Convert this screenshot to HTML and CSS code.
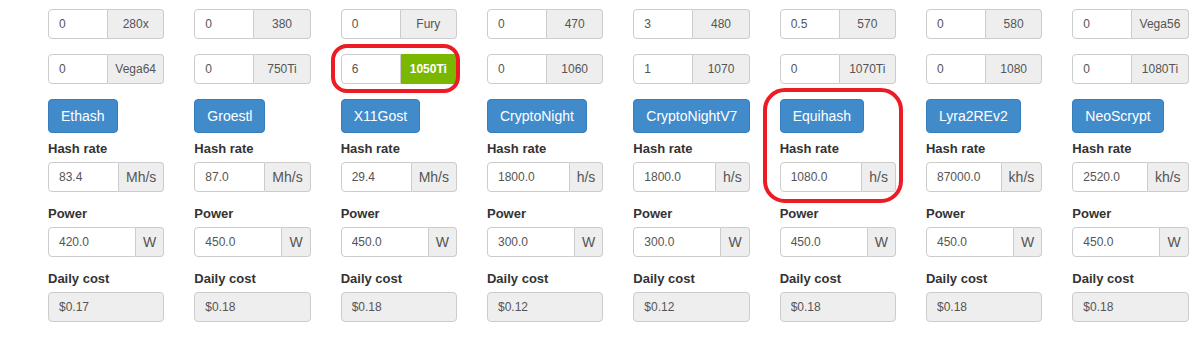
FILE: index.html
```html
<!DOCTYPE html>
<html lang="en">
  <head>
    <meta charset="UTF-8" />
    <meta name="viewport" content="width=device-width, initial-scale=1.0" />
    <title>Mining calculator</title>
    <link rel="stylesheet" href="styles.css">
  </head>
  <body>
    <main class="calc">
      <div class="algo-col">
        <div class="gpu-group"><input type="text" value="0" /><span class="gpu">280x</span></div>
        <div class="gpu-group"><input type="text" value="0" /><span class="gpu">Vega64</span></div>
        <button class="algo">Ethash</button>
        <label>Hash rate</label>
        <div class="unit-group"><input type="text" value="83.4" /><span class="unit">Mh/s</span></div>
        <label>Power</label>
        <div class="unit-group"><input type="text" value="420.0" /><span class="unit">W</span></div>
        <label>Daily cost</label>
        <input class="cost" type="text" value="$0.17" disabled />
      </div>

      <div class="algo-col">
        <div class="gpu-group"><input type="text" value="0" /><span class="gpu">380</span></div>
        <div class="gpu-group"><input type="text" value="0" /><span class="gpu">750Ti</span></div>
        <button class="algo">Groestl</button>
        <label>Hash rate</label>
        <div class="unit-group"><input type="text" value="87.0" /><span class="unit">Mh/s</span></div>
        <label>Power</label>
        <div class="unit-group"><input type="text" value="450.0" /><span class="unit">W</span></div>
        <label>Daily cost</label>
        <input class="cost" type="text" value="$0.18" disabled />
      </div>

      <div class="algo-col">
        <div class="gpu-group"><input type="text" value="0" /><span class="gpu">Fury</span></div>
        <div class="gpu-group"><input type="text" value="6" /><span class="gpu active">1050Ti</span></div>
        <button class="algo">X11Gost</button>
        <label>Hash rate</label>
        <div class="unit-group"><input type="text" value="29.4" /><span class="unit">Mh/s</span></div>
        <label>Power</label>
        <div class="unit-group"><input type="text" value="450.0" /><span class="unit">W</span></div>
        <label>Daily cost</label>
        <input class="cost" type="text" value="$0.18" disabled />
      </div>

      <div class="algo-col">
        <div class="gpu-group"><input type="text" value="0" /><span class="gpu">470</span></div>
        <div class="gpu-group"><input type="text" value="0" /><span class="gpu">1060</span></div>
        <button class="algo">CryptoNight</button>
        <label>Hash rate</label>
        <div class="unit-group"><input type="text" value="1800.0" /><span class="unit">h/s</span></div>
        <label>Power</label>
        <div class="unit-group"><input type="text" value="300.0" /><span class="unit">W</span></div>
        <label>Daily cost</label>
        <input class="cost" type="text" value="$0.12" disabled />
      </div>

      <div class="algo-col">
        <div class="gpu-group"><input type="text" value="3" /><span class="gpu">480</span></div>
        <div class="gpu-group"><input type="text" value="1" /><span class="gpu">1070</span></div>
        <button class="algo">CryptoNightV7</button>
        <label>Hash rate</label>
        <div class="unit-group"><input type="text" value="1800.0" /><span class="unit">h/s</span></div>
        <label>Power</label>
        <div class="unit-group"><input type="text" value="300.0" /><span class="unit">W</span></div>
        <label>Daily cost</label>
        <input class="cost" type="text" value="$0.12" disabled />
      </div>

      <div class="algo-col">
        <div class="gpu-group"><input type="text" value="0.5" /><span class="gpu">570</span></div>
        <div class="gpu-group"><input type="text" value="0" /><span class="gpu">1070Ti</span></div>
        <button class="algo">Equihash</button>
        <label>Hash rate</label>
        <div class="unit-group"><input type="text" value="1080.0" /><span class="unit">h/s</span></div>
        <label>Power</label>
        <div class="unit-group"><input type="text" value="450.0" /><span class="unit">W</span></div>
        <label>Daily cost</label>
        <input class="cost" type="text" value="$0.18" disabled />
      </div>

      <div class="algo-col">
        <div class="gpu-group"><input type="text" value="0" /><span class="gpu">580</span></div>
        <div class="gpu-group"><input type="text" value="0" /><span class="gpu">1080</span></div>
        <button class="algo">Lyra2REv2</button>
        <label>Hash rate</label>
        <div class="unit-group"><input type="text" value="87000.0" /><span class="unit">kh/s</span></div>
        <label>Power</label>
        <div class="unit-group"><input type="text" value="450.0" /><span class="unit">W</span></div>
        <label>Daily cost</label>
        <input class="cost" type="text" value="$0.18" disabled />
      </div>

      <div class="algo-col">
        <div class="gpu-group"><input type="text" value="0" /><span class="gpu">Vega56</span></div>
        <div class="gpu-group"><input type="text" value="0" /><span class="gpu">1080Ti</span></div>
        <button class="algo">NeoScrypt</button>
        <label>Hash rate</label>
        <div class="unit-group"><input type="text" value="2520.0" /><span class="unit">kh/s</span></div>
        <label>Power</label>
        <div class="unit-group"><input type="text" value="450.0" /><span class="unit">W</span></div>
        <label>Daily cost</label>
        <input class="cost" type="text" value="$0.18" disabled />
      </div>

      <!-- red marks drawn over the screenshot -->
      <div class="mark mark-gpu"></div>
      <div class="mark mark-algo"></div>
    </main>
  </body>
</html>
```

FILE: styles.css
```css
* {
  box-sizing: border-box;
  margin: 0;
  padding: 0;
}

body {
  font-family: "Liberation Sans", Arial, sans-serif;
  font-size: 14px;
  color: #333;
  background: #fff;
}

.calc {
  position: relative;
  display: grid;
  grid-template-columns: repeat(8, 146.33px);
  padding: 9px 0 0 33px;
}

.algo-col {
  display: flex;
  flex-direction: column;
  align-items: flex-start;
  padding: 0 15px;
}

input {
  font-family: inherit;
  font-size: 12px;
  color: #555;
  height: 30px;
  padding: 0 10px;
  border: 1px solid #ccc;
  background: #fff;
  outline: none;
}

.gpu-group,
.unit-group {
  display: flex;
  width: 100%;
  height: 30px;
  margin-bottom: 15px;
}

.gpu-group input,
.unit-group input {
  border-radius: 4px 0 0 4px;
  min-width: 0;
}

.gpu-group input {
  width: 60px;
}

.gpu {
  flex: 1;
  display: flex;
  align-items: center;
  justify-content: center;
  font-size: 12px;
  color: #555;
  background: #eee;
  border: 1px solid #ccc;
  border-left: none;
  border-radius: 0 4px 4px 0;
}

.gpu.active {
  background: #7ab800;
  border-color: #7ab800;
  color: #fff;
  font-weight: bold;
}

.unit-group input {
  flex: 1;
}

.unit {
  display: flex;
  align-items: center;
  padding: 0 7px;
  font-size: 14px;
  color: #555;
  background: #eee;
  border: 1px solid #ccc;
  border-left: none;
  border-radius: 0 4px 4px 0;
}

.algo {
  font-family: inherit;
  font-size: 14px;
  line-height: 20px;
  color: #fff;
  background: #428bca;
  border: 1px solid #357ebd;
  border-radius: 4px;
  padding: 6px 12px;
  margin-bottom: 5px;
  cursor: pointer;
}

label {
  font-size: 13px;
  font-weight: bold;
  line-height: 20px;
  padding-top: 1px;
  margin-bottom: 3px;
}

.unit-group {
  margin-bottom: 11px;
}

.cost {
  width: 100%;
  border-radius: 4px;
  background: #eee;
  -webkit-text-fill-color: #555;
  opacity: 1;
}

.mark {
  position: absolute;
  border: 4px solid #ed1c24;
}

.mark-gpu {
  left: 331px;
  top: 44px;
  width: 129px;
  height: 49px;
  border-radius: 16px;
}

.mark-algo {
  left: 763px;
  top: 88px;
  width: 140px;
  height: 115px;
  border-radius: 22px;
}
```
